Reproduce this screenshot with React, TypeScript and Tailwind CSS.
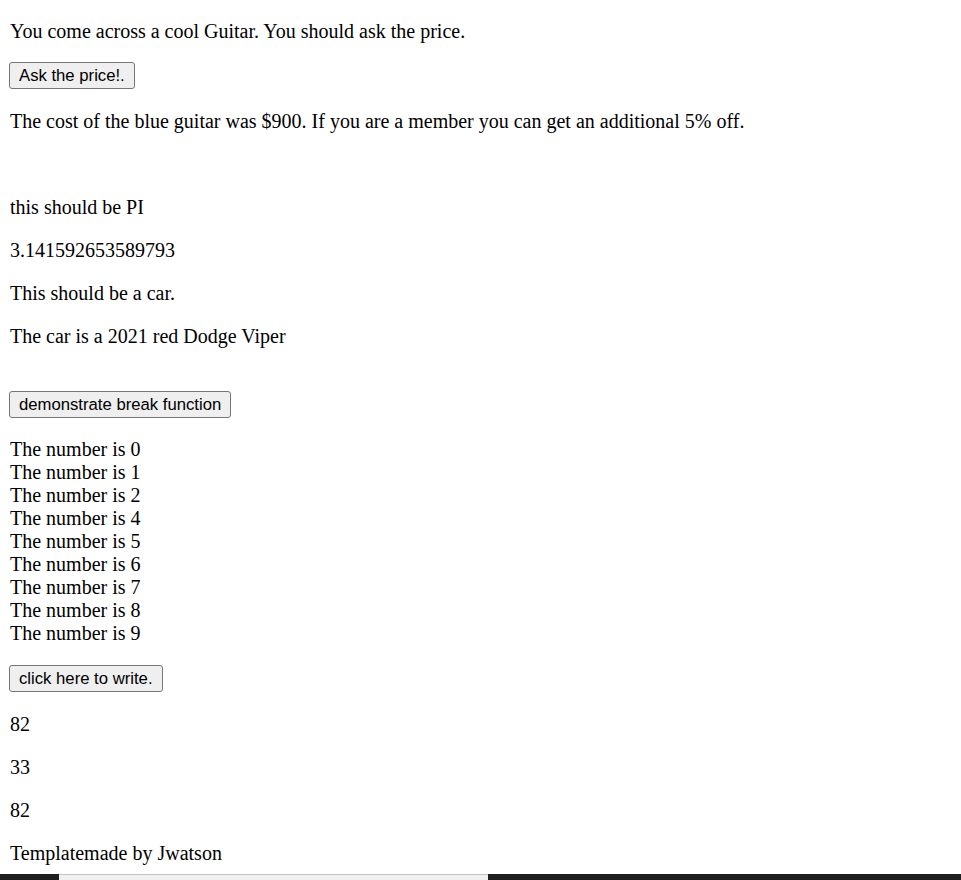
import React from "react";

const Btn = ({ label, mt }: { label: string; mt: string }) => (
  <div className={`${mt} pl-[9px]`}>
    <button className="h-[27px] px-[9px] bg-[#efefef] border border-[#767676] rounded-[3px] font-['Liberation_Sans',Arial,sans-serif] text-[16.7px] leading-[20px] text-black">
      {label}
    </button>
  </div>
);

const numbers = [0, 1, 2, 4, 5, 6, 7, 8, 9];

export default function App() {
  return (
    <div className="bg-white min-h-[880px] overflow-hidden font-['Liberation_Serif','Times_New_Roman',serif] text-[20px] leading-[23px] text-black">
      {/* guitar */}
      <p className="pt-[20px] pl-[10px]">You come across a cool Guitar. You should ask the price.</p>
      <Btn label="Ask the price!." mt="mt-[19px]" />
      <p className="mt-[21px] pl-[10px]">
        The cost of the blue guitar was $900. If you are a member you can get an additional 5% off.
      </p>

      {/* pi + car */}
      <p className="mt-[63px] pl-[10px]">this should be PI</p>
      <p className="mt-[20px] pl-[10px]">3.141592653589793</p>
      <p className="mt-[20px] pl-[10px]">This should be a car.</p>
      <p className="mt-[20px] pl-[10px]">The car is a 2021 red Dodge Viper</p>

      {/* break loop */}
      <Btn label="demonstrate break function" mt="mt-[43px]" />
      <div className="mt-[20px] pl-[10px]">
        {numbers.map((n) => (
          <div key={n}>The number is {n}</div>
        ))}
      </div>

      {/* write */}
      <Btn label="click here to write." mt="mt-[20px]" />
      <p className="mt-[21px] pl-[10px]">82</p>
      <p className="mt-[20px] pl-[10px]">33</p>
      <p className="mt-[20px] pl-[10px]">82</p>
      <p className="mt-[20px] pl-[10px]">Templatemade by Jwatson</p>

      {/* bottom strip */}
      <div className="mt-[9px] flex h-[17px] bg-[#1f1f1f]">
        <div className="w-[59px]" />
        <div className="w-[429px] bg-[#f0f0f0] border-t border-[#c4c4c4]" />
      </div>
    </div>
  );
}
